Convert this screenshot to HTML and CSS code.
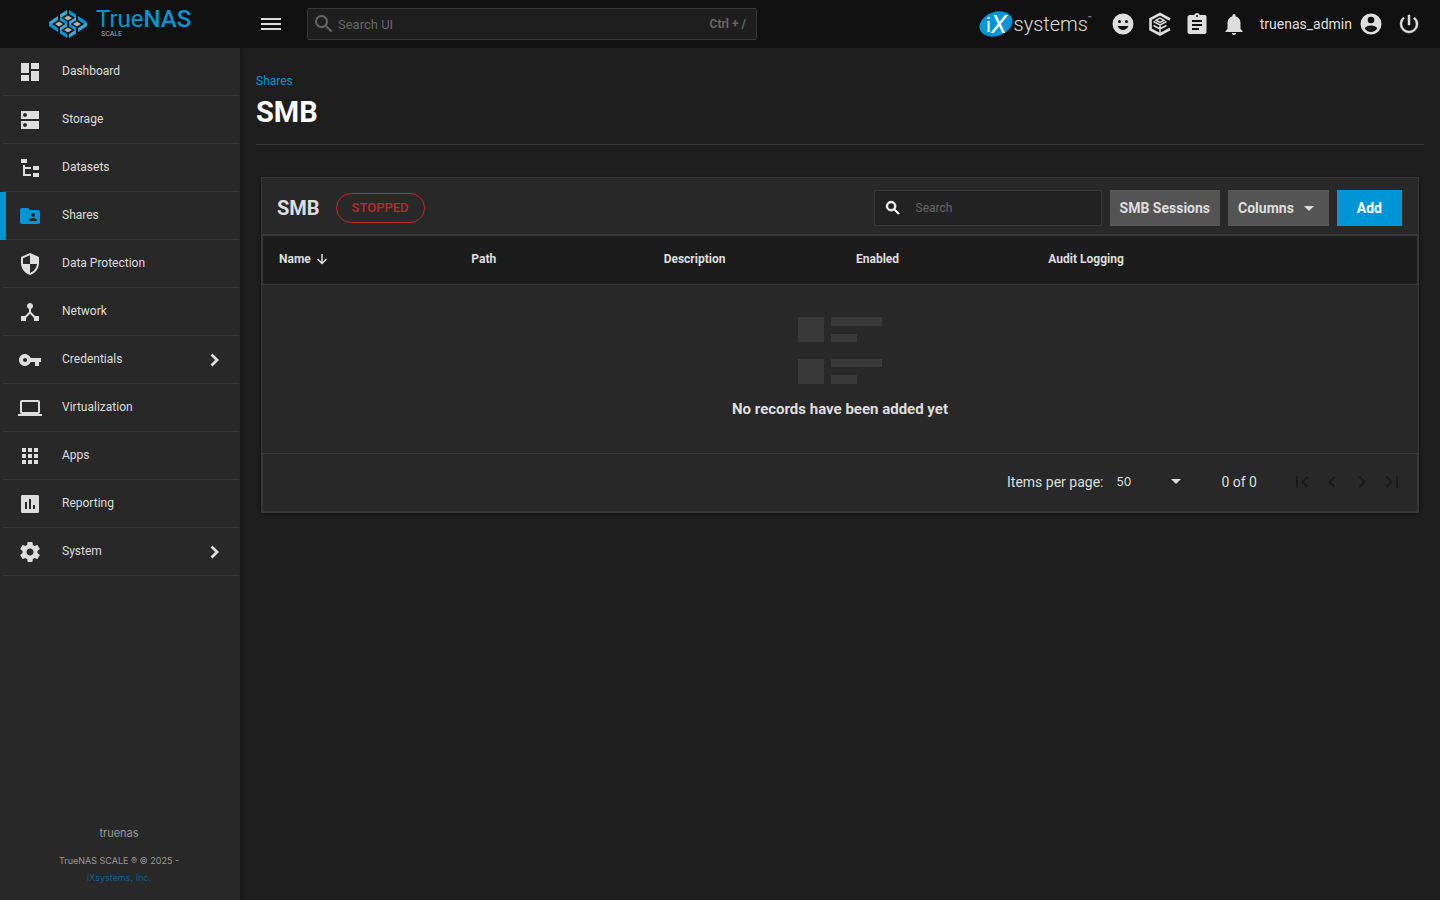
FILE: index.html
```html
<!DOCTYPE html>
<html lang="en">
<head>
<meta charset="utf-8">
<title>TrueNAS - SMB</title>
<link rel="stylesheet" href="styles.css">
</head>
<body>

<header class="topbar">
  <a class="logo" href="#" aria-label="TrueNAS SCALE">
    <svg class="logo-mark" viewBox="0 0 40 28">
      <g fill="#35a9dc">
        <path d="M1 16l9-6v-4l-9 6z M12 8.500l7-4.600v-4l-7 4.600z"/>
        <path d="M12 21.300l7-4.600v-4l-7 4.600z M21 15.300l7-4.600v-4l-7 4.600z"/>
        <path d="M21 28l7-4.600v-4l-7 4.600z M30 22l9-6v-4l-9 6z"/>
      </g>
      <g fill="#0095d5">
        <path d="M21 0l7 4.600v4l-7-4.600z M30 6l9 6-3 2-6-4z"/>
        <path d="M12 6.700l7 4.600v4l-7-4.600z M21 12.700l7 4.600v4l-7-4.600z"/>
        <path d="M1 12l9 6v4l-9-6z M12 19.400l7 4.600v4l-7-4.600z"/>
      </g>
      <g fill="#111">
        <path d="M5 14l6-4 6 4-6 4z M14 8l6-4 6 4-6 4z M23 14l6-4 6 4-6 4z M14 20l6-4 6 4-6 4z"/>
      </g>
      <g fill="#aeb0b2">
        <path d="M7 14l4-2.500 4 2.500-4 2.500z M16 8l4-2.500 4 2.500-4 2.500z M25 14l4-2.500 4 2.500-4 2.500z M16 20l4-2.500 4 2.500-4 2.500z"/>
      </g>
    </svg>
    <span class="logo-text">
      <span class="logo-name">True<b>NAS</b></span>
      <span class="logo-edition">SCALE</span>
    </span>
  </a>
  <button class="icon-button menu-toggle" aria-label="Toggle menu">
    <svg class="icon" viewBox="0 0 24 24"><path d="M2 6h20v2H2zM2 11h20v2H2zM2 16h20v2H2z"/></svg>
  </button>
  <label class="global-search">
    <svg class="icon" viewBox="0 0 24 24"><path d="M15.500 14h-.79l-.28-.27A6.470 6.470 0 0 0 16 9.500 6.500 6.500 0 1 0 9.500 16c1.610 0 3.090-.59 4.230-1.570l.27.28v.79l5 4.990L20.490 19l-4.990-5zm-6 0C7.010 14 5 11.990 5 9.500S7.010 5 9.500 5 14 7.010 14 9.500 11.990 14 9.500 14z"/></svg>
    <input type="text" placeholder="Search UI" aria-label="Search UI">
    <span class="shortcut">Ctrl + /</span>
  </label>

  <div class="topbar-right">
    <a class="ix-logo" href="#" aria-label="iXsystems">
      <svg class="ix-mark" viewBox="0 0 34 28">
        <ellipse cx="17" cy="14" rx="17" ry="12" fill="#0095d5" transform="rotate(-20 17 14)"/>
        <text x="7" y="22" class="ix-i">i</text>
        <text x="12" y="23" class="ix-x">X</text>
      </svg>
      <span class="ix-name">systems</span><span class="ix-tm">™</span>
    </a>
    <div class="topbar-actions">
      <button class="icon-button" aria-label="Feedback">
        <svg class="icon" viewBox="0 0 24 24"><path fill-rule="evenodd" d="M12 1.500a10.500 10.500 0 1 0 0 21 10.500 10.500 0 0 0 0-21zM8.500 8a1.500 1.500 0 1 1 0 3 1.500 1.500 0 0 1 0-3zm7 0a1.500 1.500 0 1 1 0 3 1.500 1.500 0 0 1 0-3zM6.500 14h11c-.8 2.200-3 4-5.500 4s-4.700-1.800-5.500-4z"/></svg>
      </button>
      <button class="icon-button" aria-label="TrueCommand">
        <svg class="icon icon-outline" viewBox="0 0 24 24">
          <path stroke-width="2.600" d="M22 7.500L12 2 2.500 7v10.500l9.500 5 10-5.500"/>
          <path stroke-width="1.500" d="M12 6.200l4 2-4 2.200-4-2.200zM12 13v9M5.500 9.500L12 13l6.500-3.500M5.500 13.500L12 17l6.500-3.500"/>
        </svg>
      </button>
      <button class="icon-button" aria-label="Jobs">
        <svg class="icon" viewBox="0 0 24 24"><path d="M20 3h-5.200C14.400 1.800 13.300 1 12 1s-2.400.8-2.800 2H4.500C3.500 3 2.500 4 2.500 5v15c0 1 1 2 2 2h15c1 0 2-1 2-2V5c0-1-.5-2-1.500-2zm-8 0a1 1 0 1 1 0 2 1 1 0 0 1 0-2zm2 15H7v-2h7v2zm3-4H7v-2h10v2zm0-4H7V8h10v2z"/></svg>
      </button>
      <button class="icon-button" aria-label="Alerts">
        <svg class="icon" viewBox="0 0 24 24"><path d="M12 23c1.200 0 2.200-.9 2.200-2H9.800c0 1.100 1 2 2.200 2zM18.500 17v-6c0-3.300-1.800-6-4.900-6.700V3.500a1.600 1.600 0 0 0-3.200 0v.8C7.300 5 5.500 7.700 5.500 11v6l-2 2v1h17v-1z"/></svg>
      </button>
    </div>
    <button class="user-button">
      <span>truenas_admin</span>
      <svg class="icon" viewBox="0 0 24 24"><path fill-rule="evenodd" d="M12 1.500a10.500 10.500 0 1 0 0 21 10.500 10.500 0 0 0 0-21zm0 3.200a3.300 3.300 0 1 1 0 6.600 3.300 3.300 0 0 1 0-6.600zM12 20a7.500 7.500 0 0 1-6.200-3.400c0-2.100 4.200-3.200 6.200-3.200s6.200 1.100 6.200 3.200A7.500 7.500 0 0 1 12 20z"/></svg>
    </button>
    <button class="icon-button power" aria-label="Power">
      <svg class="icon" viewBox="0 0 24 24"><path stroke="currentColor" stroke-width=".5" d="M13 3h-2v10h2V3zm4.830 2.170l-1.420 1.420A6.920 6.920 0 0 1 19 12a7 7 0 1 1-11.420-5.420L6.170 5.170A8.930 8.930 0 0 0 3 12a9 9 0 1 0 18 0c0-2.740-1.230-5.180-3.170-6.830z"/></svg>
    </button>
  </div>
</header>

<div class="layout">
  <aside class="sidebar">
    <nav>
      <ul class="nav-list">
        <li><a class="nav-item" href="#">
          <svg class="icon" viewBox="0 0 24 24"><path d="M3 13h8V3H3v10zm0 8h8v-6H3v6zm10 0h8V11h-8v10zm0-18v6h8V3h-8z"/></svg>
          <span>Dashboard</span></a></li>
        <li><a class="nav-item" href="#">
          <svg class="icon" viewBox="0 0 24 24"><path fill-rule="evenodd" d="M3 3h18v8H3zM3 13h18v8H3zM7 5a2 2 0 1 0 0 4 2 2 0 0 0 0-4zM7 15a2 2 0 1 0 0 4 2 2 0 0 0 0-4z"/></svg>
          <span>Storage</span></a></li>
        <li><a class="nav-item" href="#">
          <svg class="icon" viewBox="0 0 24 24"><path d="M3 3h6v4H3zM15 10h6v4h-6zM15 17h6v4h-6zM5 9h2v2h6v2H7v5h6v2H5z"/></svg>
          <span>Datasets</span></a></li>
        <li><a class="nav-item active" href="#">
          <svg class="icon" viewBox="0 0 24 24"><path d="M20 6h-8l-2-2H4c-1.100 0-2 .9-2 2v12c0 1.100.9 2 2 2h16c1.100 0 2-.9 2-2V8c0-1.100-.9-2-2-2zm-5 3c1.100 0 2 .9 2 2s-.9 2-2 2-2-.9-2-2 .9-2 2-2zm4 8h-8v-1c0-1.330 2.670-2 4-2s4 .67 4 2v1z"/></svg>
          <span>Shares</span></a></li>
        <li><a class="nav-item" href="#">
          <svg class="icon" viewBox="0 0 24 24"><path fill-rule="evenodd" d="M12 1L3 5v6c0 5.550 3.840 10.740 9 12 5.160-1.260 9-6.450 9-12V5zM12 3.200V12H5V6.300zM12 12h7c-.5 4.100-3.300 7.800-7 8.900z"/></svg>
          <span>Data Protection</span></a></li>
        <li><a class="nav-item" href="#">
          <svg class="icon" viewBox="0 0 24 24"><path d="M17 16l-4-4V8.820C14.160 8.400 15 7.300 15 6c0-1.660-1.340-3-3-3S9 4.340 9 6c0 1.300.84 2.400 2 2.820V12l-4 4H3v5h5v-3.050l4-4.200 4 4.200V21h5v-5z"/></svg>
          <span>Network</span></a></li>
        <li><a class="nav-item" href="#">
          <svg class="icon" viewBox="0 0 24 24"><path d="M12.650 10C11.830 7.670 9.610 6 7 6c-3.310 0-6 2.690-6 6s2.690 6 6 6c2.610 0 4.830-1.670 5.650-4H17v4h4v-4h2v-4H12.650zM7 14c-1.100 0-2-.9-2-2s.9-2 2-2 2 .9 2 2-.9 2-2 2z"/></svg>
          <span>Credentials</span>
          <svg class="icon chevron" viewBox="0 0 24 24"><path d="M9.500 5.500L7.500 7.500l4.600 4.500-4.600 4.500 2 2L16 12z"/></svg></a></li>
        <li><a class="nav-item" href="#">
          <svg class="icon" viewBox="0 0 24 24"><path d="M20 18c1.100 0 2-.9 2-2V6c0-1.100-.9-2-2-2H4c-1.100 0-2 .9-2 2v10c0 1.100.9 2 2 2H0v2h24v-2h-4zM4 6h16v10H4V6z"/></svg>
          <span>Virtualization</span></a></li>
        <li><a class="nav-item" href="#">
          <svg class="icon" viewBox="0 0 24 24"><path d="M4 8h4V4H4v4zm6 12h4v-4h-4v4zm-6 0h4v-4H4v4zm0-6h4v-4H4v4zm6 0h4v-4h-4v4zm6-10v4h4V4h-4zm-6 4h4V4h-4v4zm6 6h4v-4h-4v4zm0 6h4v-4h-4v4z"/></svg>
          <span>Apps</span></a></li>
        <li><a class="nav-item" href="#">
          <svg class="icon" viewBox="0 0 24 24"><path d="M20 3H4L3 4v16l1 1h16l1-1V4zM9 17H7v-7h2v7zm4 0h-2V7h2v10zm4 0h-2v-4h2v4z"/></svg>
          <span>Reporting</span></a></li>
        <li><a class="nav-item" href="#">
          <svg class="icon" viewBox="0 0 24 24"><path d="M19.430 12.980c.04-.32.07-.64.07-.98s-.03-.66-.07-.98l2.110-1.650c.19-.15.24-.42.12-.64l-2-3.460c-.12-.22-.39-.3-.61-.22l-2.490 1c-.52-.4-1.080-.73-1.690-.98l-.38-2.650C14.460 2.180 14.250 2 14 2h-4c-.25 0-.46.18-.49.42l-.38 2.650c-.61.25-1.170.59-1.690.98l-2.490-1c-.23-.09-.49 0-.61.22l-2 3.460c-.13.22-.07.49.12.64l2.110 1.650c-.04.32-.07.65-.07.98s.03.66.07.98l-2.110 1.650c-.19.15-.24.42-.12.64l2 3.460c.12.22.39.3.61.22l2.490-1c.52.4 1.080.73 1.690.98l.38 2.650c.03.24.24.42.49.42h4c.25 0 .46-.18.49-.42l.38-2.650c.61-.25 1.170-.59 1.690-.98l2.490 1c.23.09.49 0 .61-.22l2-3.460c.12-.22.07-.49-.12-.64l-2.110-1.650zM12 15.500c-1.930 0-3.500-1.570-3.500-3.500s1.570-3.500 3.500-3.500 3.500 1.570 3.500 3.500-1.570 3.500-3.500 3.500z"/></svg>
          <span>System</span>
          <svg class="icon chevron" viewBox="0 0 24 24"><path d="M9.500 5.500L7.500 7.500l4.600 4.500-4.600 4.500 2 2L16 12z"/></svg></a></li>
      </ul>
    </nav>
    <footer class="sidebar-footer">
      <p class="hostname">truenas</p>
      <p class="copyright">TrueNAS SCALE ® © 2025 -<br><a href="#">iXsystems, Inc.</a></p>
    </footer>
  </aside>

  <main class="content">
    <div class="page-header">
      <a class="breadcrumb" href="#">Shares</a>
      <h1>SMB</h1>
    </div>

    <section class="card">
      <div class="card-header">
        <h2>SMB</h2>
        <span class="status">STOPPED</span>
        <div class="card-actions">
          <label class="table-search">
            <svg viewBox="0 0 24 24"><path d="M15.500 14h-.79l-.28-.27A6.470 6.470 0 0 0 16 9.500 6.500 6.500 0 1 0 9.500 16c1.610 0 3.090-.59 4.230-1.570l.27.28v.79l5 4.990L20.490 19l-4.990-5zm-6 0C7.010 14 5 11.990 5 9.500S7.010 5 9.500 5 14 7.010 14 9.500 11.990 14 9.500 14z"/></svg>
            <input type="text" placeholder="Search" aria-label="Search">
          </label>
          <button class="btn">SMB Sessions</button>
          <button class="btn">Columns
            <svg class="caret" viewBox="0 0 10 5"><path d="M0 0h10L5 5z"/></svg>
          </button>
          <button class="btn btn-primary">Add</button>
        </div>
      </div>

      <table class="table">
        <thead>
          <tr>
            <th>Name <svg class="sort" viewBox="0 0 12 12"><path d="M6 1v9M1.500 6L6 10.500 10.500 6"/></svg></th>
            <th>Path</th>
            <th>Description</th>
            <th>Enabled</th>
            <th>Audit Logging</th>
            <th></th>
          </tr>
        </thead>
      </table>

      <div class="empty">
        <svg class="empty-icon" viewBox="0 0 84 67">
          <path d="M0 0h26v25H0zM33 0h51v9H33zM33 17h26v8H33zM0 42h26v25H0zM33 42h51v8H33zM33 58h26v9H33z"/>
        </svg>
        <h3>No records have been added yet</h3>
      </div>

      <div class="pager">
        <label for="pageSize">Items per page:</label>
        <span class="page-size">
          <select id="pageSize">
            <option>10</option>
            <option selected>50</option>
            <option>100</option>
          </select>
          <svg class="caret" viewBox="0 0 10 5"><path d="M0 0h10L5 5z"/></svg>
        </span>
        <span class="range">0 of 0</span>
        <div class="pager-buttons">
          <button disabled aria-label="First page"><svg viewBox="0 0 24 24"><path d="M18.410 16.590L13.820 12l4.590-4.590L17 6l-6 6 6 6zM6 6h2v12H6z"/></svg></button>
          <button disabled aria-label="Previous page"><svg viewBox="0 0 24 24"><path d="M15.410 7.410L14 6l-6 6 6 6 1.410-1.410L10.830 12z"/></svg></button>
          <button disabled aria-label="Next page"><svg viewBox="0 0 24 24"><path d="M10 6L8.590 7.410 13.170 12l-4.580 4.590L10 18l6-6z"/></svg></button>
          <button disabled aria-label="Last page"><svg viewBox="0 0 24 24"><path d="M5.590 7.410L10.180 12l-4.590 4.590L7 18l6-6-6-6zM16 6h2v12h-2z"/></svg></button>
        </div>
      </div>
    </section>
  </main>
</div>

</body>
</html>
```
FILE: styles.css
```css
* {
  box-sizing: border-box;
}

body {
  display: flex;
  flex-direction: column;
  min-height: 100vh;
  margin: 0;
  background-color: #1e1e1e;
  color: #dedede;
  font-family: Roboto, "Liberation Sans", sans-serif;
  font-size: 14px;
}

a {
  color: #0095d5;
  text-decoration: none;
}

button,
input,
select {
  font-family: inherit;
  color: inherit;
}

button {
  padding: 0;
  border: none;
  background: none;
  cursor: pointer;
}

.icon {
  flex: none;
  display: block;
  width: 24px;
  height: 24px;
  fill: currentColor;
}

.icon-outline {
  fill: none;
  stroke: currentColor;
}

/* Top bar */
.topbar {
  display: flex;
  align-items: center;
  height: 48px;
  background-color: #111;
}

.logo {
  display: flex;
  align-items: center;
  gap: 8px;
  width: 240px;
  padding-left: 48px;
}

.logo-mark {
  width: 40px;
  height: 28px;
}

.logo-text {
  display: flex;
  flex-direction: column;
  padding-bottom: 3px;
}

.logo-name {
  font-size: 24px;
  line-height: 24px;
  font-weight: 400;
}

.logo-name b {
  font-weight: 500;
}

.logo-edition {
  padding-left: 5px;
  color: #aaa;
  font-size: 7px;
  line-height: 7px;
}

.icon-button {
  display: flex;
  align-items: center;
  justify-content: center;
}

.menu-toggle {
  width: 62px;
}

.global-search {
  display: flex;
  align-items: center;
  flex: 0 1 450px;
  height: 32px;
  margin-left: 5px;
  padding: 0 10px 0 4px;
  border: 1px solid #383838;
  border-radius: 2px;
  background-color: #1e1e1e;
  color: #666;
}

.global-search input {
  flex: 1;
  min-width: 0;
  padding: 0 2px;
  border: none;
  outline: none;
  background: none;
  font-size: 13px;
}

.shortcut {
  font-size: 12px;
  font-weight: 700;
}

input::placeholder {
  color: #666;
  opacity: 1;
}

.topbar-right {
  display: flex;
  align-items: center;
  margin-left: auto;
  padding-right: 19px;
}

.ix-logo {
  display: flex;
  align-items: center;
  margin-right: 19px;
  color: #dedede;
}

.ix-mark {
  width: 34px;
  height: 28px;
  fill: #fff;
  overflow: visible;
}

.ix-i {
  font-size: 20px;
}

.ix-x {
  font-size: 26px;
  font-style: italic;
}

.ix-name {
  padding-left: 1px;
  font-size: 20px;
  font-weight: 300;
}

.ix-tm {
  align-self: flex-start;
  padding-top: 4px;
  font-size: 6px;
}

.topbar-actions {
  display: flex;
  gap: 13px;
}

.user-button {
  display: flex;
  align-items: center;
  gap: 7px;
  margin: 0 14px 0 14px;
  font-size: 14px;
}

/* Layout */
.layout {
  flex: 1;
  display: grid;
  grid-template-columns: 240px 1fr;
}

.sidebar {
  display: flex;
  flex-direction: column;
  justify-content: space-between;
  background-color: #282828;
  box-shadow: 0 0 5px #111;
  clip-path: inset(0 -6px 0 0);
}

.nav-list {
  margin: 0;
  padding: 0;
  list-style: none;
}

.nav-list li {
  padding: 0 1px 0 3px;
}

.nav-item {
  position: relative;
  display: flex;
  align-items: center;
  height: 48px;
  padding: 0 12px 0 15px;
  border-bottom: 1px solid #383838;
  color: #dedede;
  font-size: 12px;
}

.nav-item span {
  padding: 0 0 2px 20px;
}

.nav-item.active .icon {
  color: #0095d5;
}

.nav-item.active::before {
  content: "";
  position: absolute;
  top: 0;
  bottom: -1px;
  left: -3px;
  width: 6px;
  background-color: #0095d5;
}

.chevron {
  margin-left: auto;
}

.sidebar-footer {
  padding: 0 2px 14px 0;
  color: #999;
  font-family: Inter, Roboto, sans-serif;
  text-align: center;
}

.sidebar-footer p {
  margin: 0;
}

.hostname {
  font-size: 11px;
  line-height: 20px;
}

.copyright {
  padding-top: 9px;
  font-size: 9px;
  line-height: 17px;
}

.copyright a {
  color: #115f8b;
}

/* Page */
.content {
  padding: 24px 16px;
}

.page-header {
  padding-bottom: 12px;
  border-bottom: 1px solid #383838;
}

.breadcrumb {
  display: block;
  font-size: 12px;
  line-height: 18px;
}

h1,
h2,
h3 {
  margin: 0;
}

h1 {
  padding-top: 2px;
  color: #fff;
  font-size: 29px;
  line-height: 40px;
}

.card {
  margin: 32px 5px 0;
  border: 1px solid #383838;
  background-color: #282828;
  box-shadow: 0 1px 3px #111;
}

.card-header {
  display: flex;
  align-items: center;
  gap: 16px;
  padding: 12px 16px 8px 15px;
  border-bottom: 1px solid #383838;
}

.card-header h2 {
  font-size: 20px;
}

.status {
  padding: 0 15px;
  border: 1px solid #b92b27;
  border-radius: 15px;
  color: #b92b27;
  font-size: 13px;
  font-weight: 500;
  line-height: 28px;
}

.card-actions {
  display: flex;
  gap: 8px;
  margin-left: auto;
}

.table-search {
  display: flex;
  align-items: center;
  gap: 12px;
  width: 228px;
  height: 36px;
  padding: 0 9px;
  border: 1px solid #383838;
  background-color: #222;
}

.table-search svg {
  flex: none;
  width: 18px;
  height: 18px;
  fill: #fff;
  stroke: #fff;
}

.table-search input {
  flex: 1;
  min-width: 0;
  border: none;
  outline: none;
  background: none;
  font-size: 12px;
}

.btn {
  display: flex;
  align-items: center;
  gap: 10px;
  padding: 0 10px;
  background-color: #545454;
  font-size: 14px;
  font-weight: 700;
}

.btn .caret {
  margin-right: 5px;
}

.btn-primary {
  padding: 0 20px;
  background-color: #0095d5;
  color: #fff;
}

.caret {
  width: 10px;
  height: 5px;
  fill: currentColor;
}

.table {
  width: 100%;
  border: 1px solid #383838;
  border-collapse: separate;
  border-spacing: 0;
  table-layout: fixed;
  background-color: #1c1c1c;
}

.table th {
  height: 48px;
  padding: 0 14px 2px 16px;
  font-size: 12px;
  text-align: left;
}

.sort {
  width: 12px;
  height: 12px;
  margin-left: 2px;
  vertical-align: -2px;
  fill: none;
  stroke: currentColor;
  stroke-width: 1.5;
}

.empty {
  display: flex;
  flex-direction: column;
  align-items: center;
  gap: 14px;
  padding: 32px 16px;
}

.empty-icon {
  width: 84px;
  height: 67px;
  fill: #393939;
}

.empty h3 {
  font-size: 15px;
  line-height: 23px;
}

.pager {
  display: flex;
  align-items: center;
  justify-content: flex-end;
  height: 59px;
  padding: 0 10px 2px;
  border: 1px solid #383838;
}

.page-size {
  display: flex;
  align-items: center;
  margin-left: 13px;
}

.page-size select {
  width: 69px;
  margin-right: -14px;
  padding: 0;
  border: none;
  outline: none;
  appearance: none;
  background-color: transparent;
  font-family: Inter, Roboto, sans-serif;
  font-size: 12px;
}

.page-size .caret {
  pointer-events: none;
}

.range {
  margin: 0 30px 0 40px;
}

.pager-buttons {
  display: flex;
}

.pager-buttons button {
  display: flex;
  align-items: center;
  justify-content: center;
  width: 30px;
  height: 30px;
}

.pager-buttons svg {
  width: 24px;
  height: 24px;
  fill: #191919;
}
```
